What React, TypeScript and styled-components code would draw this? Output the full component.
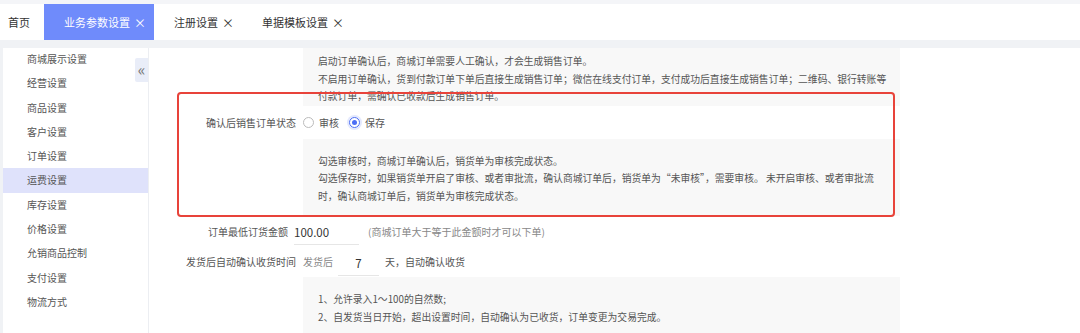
import React from 'react';
import styled, { createGlobalStyle } from 'styled-components';

const GlobalStyle = createGlobalStyle`
  html, body {
    margin: 0;
    padding: 0;
    background: #f0f2f5;
    font-family: "Noto Sans CJK SC", "Noto Sans", sans-serif;
    overflow: hidden;
  }
  * { box-sizing: border-box; }
`;

const menu = [
  '商城展示设置',
  '经营设置',
  '商品设置',
  '客户设置',
  '订单设置',
  '运费设置',
  '库存设置',
  '价格设置',
  '允销商品控制',
  '支付设置',
  '物流方式',
];

const tabs = [
  { name: '首页', closable: false },
  { name: '业务参数设置', closable: true, active: true },
  { name: '注册设置', closable: true },
  { name: '单据模板设置', closable: true },
];

const App = () => {
  return (
    <Page>
      <GlobalStyle />
      <TopStrip />
      <TabBar>
        {tabs.map(t => (
          <Tab key={t.name} $active={!!t.active} $home={!t.closable}>
            {t.name}
            {t.closable && <Close>×</Close>}
          </Tab>
        ))}
      </TabBar>
      <Body>
        <Sidebar>
          <MenuList>
            {menu.map(m => (
              <MenuItem key={m} $active={m === '运费设置'}>{m}</MenuItem>
            ))}
          </MenuList>
          <Collapse>«</Collapse>
        </Sidebar>
        <Content>
          <Form>
            <span />
            <Tip $top={5} $bottom={0}>
              启动订单确认后，商城订单需要人工确认，才会生成销售订单。<br />
              不启用订单确认，货到付款订单下单后直接生成销售订单；微信在线支付订单，支付成功后直接生成销售订单；二维码、银行转账等<br />
              付款订单，需确认已收款后生成销售订单。
            </Tip>

            <Label $h={33}>确认后销售订单状态</Label>
            <Field>
              <Radio>
                <Dot $checked={false} />
                审核
              </Radio>
              <Radio>
                <Dot $checked />
                保存
              </Radio>
            </Field>

            <span />
            <Tip $top={14} $bottom={11}>
              勾选审核时，商城订单确认后，销货单为审核完成状态。<br />
              勾选保存时，如果销货单开启了审核、或者审批流，确认商城订单后，销货单为“未审核”，需要审核。 未开启审核、或者审批流<br />
              时，确认商城订单后，销货单为审核完成状态。
            </Tip>

            <Label $h={30} $pr={8}>订单最低订货金额</Label>
            <Field>
              <LineInput $w={65} $shift={-9}>100.00</LineInput>
              <Hint $gap={0}>(商城订单大于等于此金额时才可以下单)</Hint>
            </Field>

            <Label $h={31}>发货后自动确认收货时间</Label>
            <Field>
              <Hint $gap={5}>发货后</Hint>
              <LineInput $w={41} $center>7</LineInput>
              <Plain>天，自动确认收货</Plain>
            </Field>

            <span />
            <Tip $top={14} $bottom={20}>
              1、允许录入1～100的自然数;<br />
              2、自发货当日开始，超出设置时间，自动确认为已收货，订单变更为交易完成。
            </Tip>
          </Form>
          <Highlight />
        </Content>
      </Body>
    </Page>
  );
};

export default App;

const Page = styled.div`
  width: 1080px;
  height: 333px;
  display: flex;
  flex-direction: column;
  background: #f0f2f5;
`;

const TopStrip = styled.div`
  height: 4px;
  background: #f4f5f8;
`;

const TabBar = styled.div`
  height: 36px;
  background: #fff;
  display: flex;
  align-items: stretch;
  padding-left: 8px;
  margin-bottom: 8px;
`;

const Tab = styled.div<{ $active: boolean; $home: boolean }>`
  display: flex;
  align-items: center;
  font-size: 11px;
  color: ${p => (p.$active ? '#fff' : '#333')};
  background: ${p => (p.$active ? '#6f8bfb' : 'transparent')};
  padding: ${p => (p.$home ? '0 14px 0 0' : '0 8px 0 20px')};
`;

const Close = styled.span`
  font-size: 12px;
  margin-left: 4px;
`;

const Body = styled.div`
  flex: 1;
  display: flex;
  padding-left: 3px;
  min-height: 0;
`;

const Sidebar = styled.div`
  position: relative;
  width: 145px;
  background: #fff;
`;

const MenuList = styled.div`
  display: flex;
  flex-direction: column;
  margin-top: -1px;
`;

const MenuItem = styled.div<{ $active: boolean }>`
  height: 24.3px;
  line-height: 24.3px;
  padding-left: 24px;
  font-size: 10px;
  color: #555;
  background: ${p => (p.$active ? '#dfe2fb' : 'transparent')};
`;

const Collapse = styled.div`
  position: absolute;
  right: 0;
  top: 10px;
  width: 13px;
  height: 24px;
  background: #e9edf8;
  color: #777;
  font-size: 16px;
  line-height: 1;
  display: flex;
  align-items: center;
  justify-content: center;
  padding-bottom: 2px;
  border-radius: 2px 0 0 2px;
`;

const Content = styled.div`
  position: relative;
  flex: 1;
  background: #fff;
  border-left: 1px solid #eceef2;
`;

const Form = styled.div`
  display: grid;
  grid-template-columns: 147px 597px;
  column-gap: 7px;
  align-items: center;
`;

const Label = styled.div<{ $h: number; $pr?: number }>`
  height: ${p => p.$h}px;
  display: flex;
  align-items: center;
  justify-content: flex-end;
  padding-right: ${p => p.$pr || 0}px;
  font-size: 10px;
  color: #555;
  white-space: nowrap;
`;

const Field = styled.div`
  height: 100%;
  display: flex;
  align-items: center;
  font-size: 10px;
  color: #555;
`;

const Tip = styled.div<{ $top: number; $bottom: number }>`
  background: #f8f8f8;
  font-size: 9.8px;
  line-height: 17.5px;
  color: #555;
  white-space: nowrap;
  overflow: hidden;
  padding: ${p => p.$top}px 0 ${p => p.$bottom}px 15px;
`;

const Radio = styled.label`
  display: flex;
  align-items: center;
  margin-right: 10px;
  color: #555;
`;

const Dot = styled.span<{ $checked: boolean }>`
  width: 11px;
  height: 11px;
  border-radius: 50%;
  border: 1px solid ${p => (p.$checked ? '#4c6ef5' : '#bbb')};
  box-shadow: ${p => (p.$checked ? '0 0 0 2px #e3e8fd' : 'none')};
  margin-right: 5px;
  display: flex;
  align-items: center;
  justify-content: center;
  &::after {
    content: '';
    width: 5px;
    height: 5px;
    border-radius: 50%;
    background: ${p => (p.$checked ? '#4c6ef5' : 'transparent')};
  }
`;

const LineInput = styled.div<{ $w: number; $shift?: number; $center?: boolean }>`
  width: ${p => p.$w}px;
  height: 25px;
  line-height: 25px;
  margin-top: 3px;
  margin-left: ${p => p.$shift || 0}px;
  margin-right: ${p => (p.$center ? 6 : 9)}px;
  border-bottom: 1px solid #e6e6e6;
  font-size: 11.5px;
  color: #333;
  text-align: ${p => (p.$center ? 'center' : 'left')};
`;

const Hint = styled.span<{ $gap: number }>`
  color: #888;
  font-size: 10px;
  margin-right: ${p => p.$gap}px;
`;

const Plain = styled.span`
  color: #555;
  font-size: 10px;
`;

const Highlight = styled.div`
  position: absolute;
  left: 28px;
  top: 44px;
  width: 718px;
  height: 125px;
  border: 2px solid #e8433a;
  border-radius: 4px;
  pointer-events: none;
`;
